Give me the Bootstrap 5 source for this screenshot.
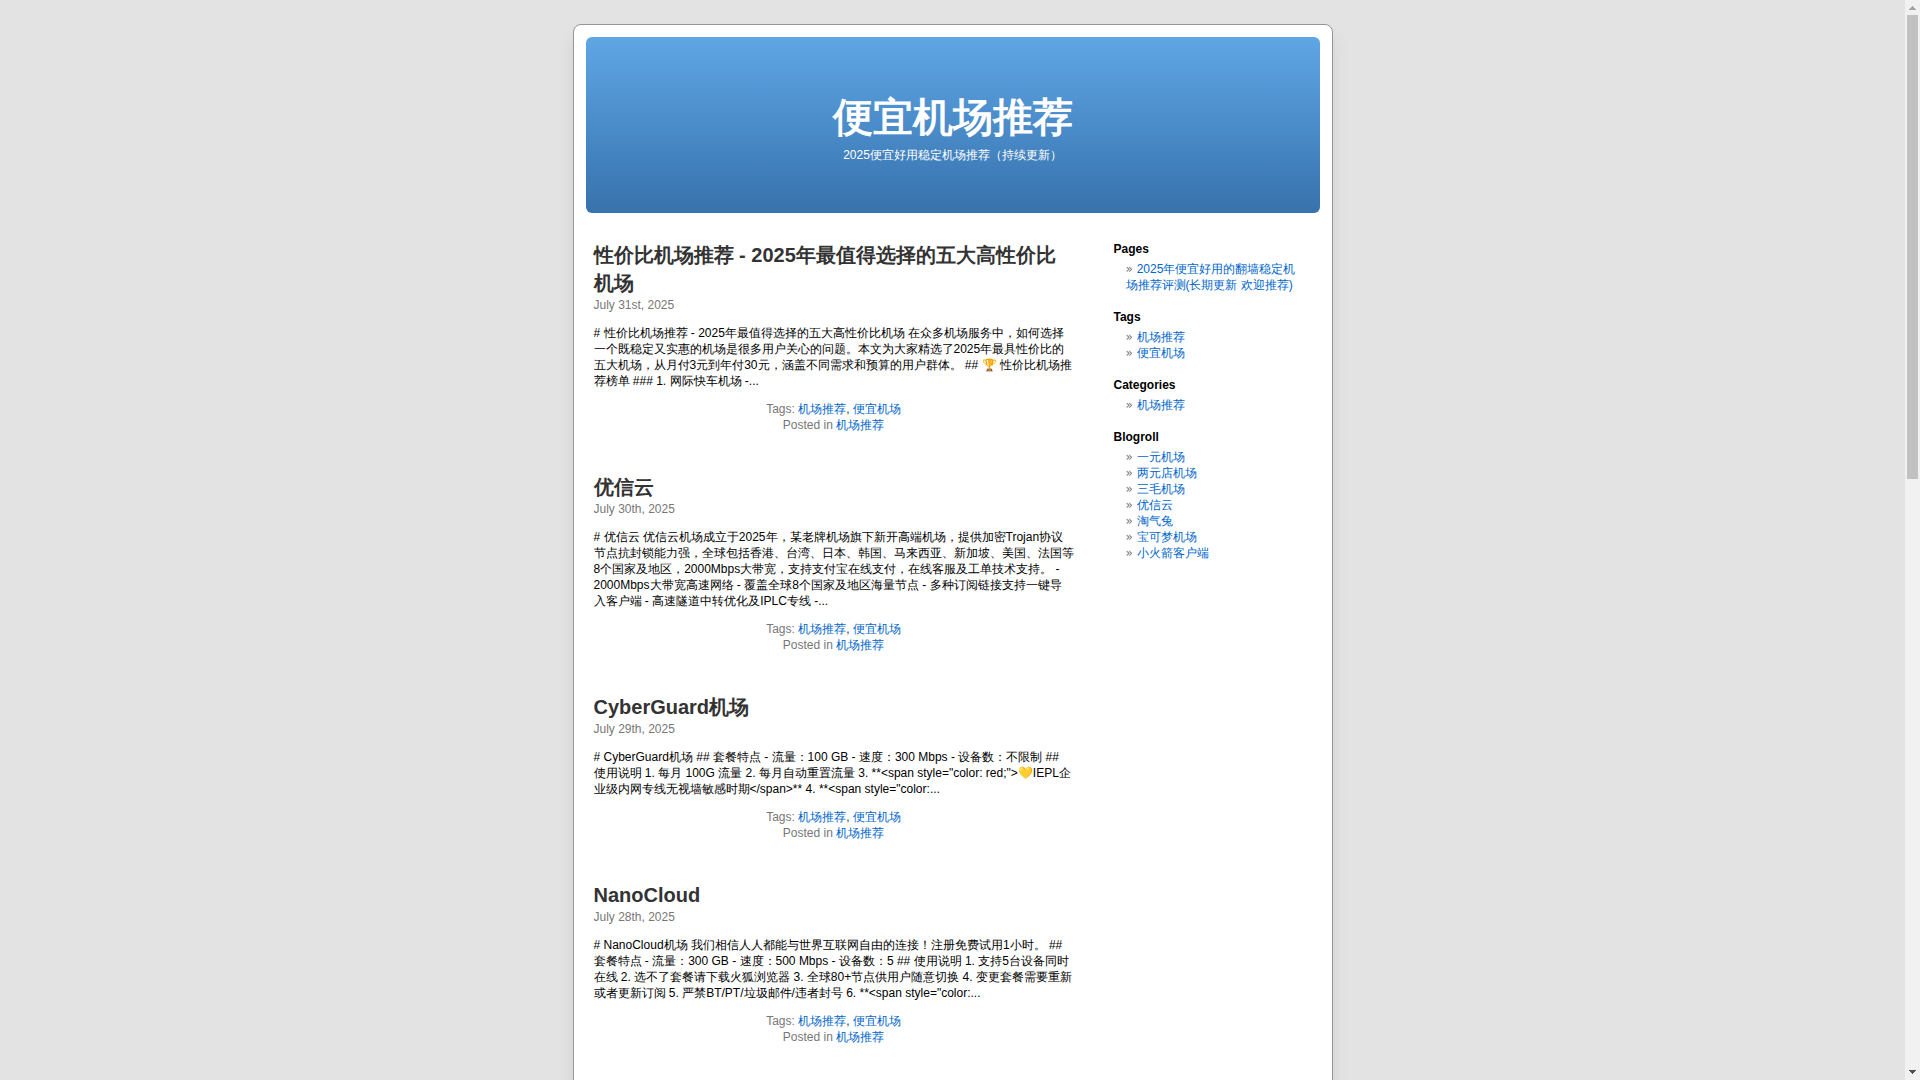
<!DOCTYPE html>
<html lang="zh">
<head>
<meta charset="utf-8">
<meta name="viewport" content="width=device-width, initial-scale=1">
<title>便宜机场推荐</title>
<link rel="stylesheet" href="https://cdn.jsdelivr.net/npm/bootstrap@5.3.0/dist/css/bootstrap.min.css">
<style>
body { font-family: "Liberation Sans", Arial, sans-serif; font-size: 12px; line-height: 16px; color: #000; background: #e3e3e3; }
a { color: #06c; text-decoration: none; }
a:hover { color: #147; text-decoration: underline; }
.scroller { min-width: 0; overflow-y: auto; scrollbar-width: none; }
.scroller::-webkit-scrollbar { display: none; }
.sheet { max-width: 760px; min-height: 1200px; margin-top: 24px; padding: 12px; background: #fff; border: 1px solid #959596; border-radius: 8px; box-shadow: 0 12px 18px rgba(0,0,0,.08); }
.masthead { height: 176px; padding-top: 6px; border-radius: 6px; background: linear-gradient(#5fa6e5, #4b8cca 50%, #3f7eba 76%, #3972ad); color: #fff; }
.masthead h1 { font-size: 40px; line-height: 48px; font-weight: 700; margin: 0 0 6px; }
.masthead h1 a { color: #fff; }
.columns { padding: 28px 16px 0 8px; }
.posts { max-width: 480px; }
.entry { margin-bottom: 40px; }
.entry h2 { font-size: 20px; line-height: 28px; font-weight: 700; margin: 0; }
.entry h2 a { color: #333; }
.entry .date, .entry .meta { color: #777; }
.entry .sep { color: #333; }
.entry p { margin: 12px 0; }
.side { width: 190px; }
.side h2 { font-size: 12px; line-height: 16px; font-weight: 700; margin: 0 0 4px; }
.side ul { margin: 0 0 16px; padding-left: 12px; }
.side li::before { content: "\00BB \0020"; color: #777; font-family: "DejaVu Sans", sans-serif; line-height: 1; }
.bar { width: 15px; background: #f1f1f1; }
.bar svg { display: block; }
.thumb { height: 464px; margin: 0 2px; background: #c1c1c1; }
</style>
<script src="https://cdn.jsdelivr.net/npm/bootstrap@5.3.0/dist/js/bootstrap.bundle.min.js"></script>
</head>
<body class="d-flex vh-100 overflow-hidden">
<div class="scroller flex-grow-1">
  <div class="sheet mx-auto">
    <header class="masthead d-flex flex-column align-items-center justify-content-center text-center">
      <h1><a href="#">便宜机场推荐</a></h1>
      <div>2025便宜好用稳定机场推荐（持续更新）</div>
    </header>
    <div class="columns d-flex justify-content-between">
      <main class="posts">
        <article class="entry">
          <h2><a href="#">性价比机场推荐 - 2025年最值得选择的五大高性价比机场</a></h2>
          <div class="date">July 31st, 2025</div>
          <p># 性价比机场推荐 - 2025年最值得选择的五大高性价比机场 在众多机场服务中，如何选择一个既稳定又实惠的机场是很多用户关心的问题。本文为大家精选了2025年最具性价比的五大机场，从月付3元到年付30元，涵盖不同需求和预算的用户群体。 ## 🏆 性价比机场推荐榜单 ### 1. 网际快车机场 -...</p>
          <div class="meta text-center">Tags: <a href="#">机场推荐</a><span class="sep">,</span> <a href="#">便宜机场</a><br>Posted in <a href="#">机场推荐</a></div>
        </article>
        <article class="entry">
          <h2><a href="#">优信云</a></h2>
          <div class="date">July 30th, 2025</div>
          <p># 优信云 优信云机场成立于2025年，某老牌机场旗下新开高端机场，提供加密Trojan协议节点抗封锁能力强，全球包括香港、台湾、日本、韩国、马来西亚、新加坡、美国、法国等8个国家及地区，2000Mbps大带宽，支持支付宝在线支付，在线客服及工单技术支持。 - 2000Mbps大带宽高速网络 - 覆盖全球8个国家及地区海量节点 - 多种订阅链接支持一键导入客户端 - 高速隧道中转优化及IPLC专线 -...</p>
          <div class="meta text-center">Tags: <a href="#">机场推荐</a><span class="sep">,</span> <a href="#">便宜机场</a><br>Posted in <a href="#">机场推荐</a></div>
        </article>
        <article class="entry">
          <h2><a href="#">CyberGuard机场</a></h2>
          <div class="date">July 29th, 2025</div>
          <p># CyberGuard机场 ## 套餐特点 - 流量：100 GB - 速度：300 Mbps - 设备数：不限制 ## 使用说明 1. 每月 100G 流量 2. 每月自动重置流量 3. **&lt;span style="color: red;"&gt;💛IEPL企业级内网专线无视墙敏感时期&lt;/span&gt;** 4. **&lt;span style="color:...</p>
          <div class="meta text-center">Tags: <a href="#">机场推荐</a><span class="sep">,</span> <a href="#">便宜机场</a><br>Posted in <a href="#">机场推荐</a></div>
        </article>
        <article class="entry">
          <h2><a href="#">NanoCloud</a></h2>
          <div class="date">July 28th, 2025</div>
          <p># NanoCloud机场 我们相信人人都能与世界互联网自由的连接！注册免费试用1小时。 ## 套餐特点 - 流量：300 GB - 速度：500 Mbps - 设备数：5 ## 使用说明 1. 支持5台设备同时在线 2. 选不了套餐请下载火狐浏览器 3. 全球80+节点供用户随意切换 4. 变更套餐需要重新或者更新订阅 5. 严禁BT/PT/垃圾邮件/违者封号 6. **&lt;span style="color:...</p>
          <div class="meta text-center">Tags: <a href="#">机场推荐</a><span class="sep">,</span> <a href="#">便宜机场</a><br>Posted in <a href="#">机场推荐</a></div>
        </article>
      </main>
      <aside class="side flex-shrink-0">
        <h2>Pages</h2>
        <ul class="list-unstyled">
          <li><a href="#">2025年便宜好用的翻墙稳定机场推荐评测(长期更新 欢迎推荐)</a></li>
        </ul>
        <h2>Tags</h2>
        <ul class="list-unstyled">
          <li><a href="#">机场推荐</a></li>
          <li><a href="#">便宜机场</a></li>
        </ul>
        <h2>Categories</h2>
        <ul class="list-unstyled">
          <li><a href="#">机场推荐</a></li>
        </ul>
        <h2>Blogroll</h2>
        <ul class="list-unstyled">
          <li><a href="#">一元机场</a></li>
          <li><a href="#">两元店机场</a></li>
          <li><a href="#">三毛机场</a></li>
          <li><a href="#">优信云</a></li>
          <li><a href="#">淘气兔</a></li>
          <li><a href="#">宝可梦机场</a></li>
          <li><a href="#">小火箭客户端</a></li>
        </ul>
      </aside>
    </div>
  </div>
</div>
<div class="bar flex-shrink-0 d-flex flex-column" aria-hidden="true">
  <svg width="15" height="15" shape-rendering="crispEdges"><path d="M7 6h1v1h1v1h1v1h1v1H4V9h1V8h1V7h1z" fill="#a3a3a3"/></svg>
  <div class="thumb"></div>
  <svg class="mt-auto" width="15" height="15" shape-rendering="crispEdges"><path d="M4 5h7v1h-1v1H9v1H8v1H7V8H6V7H5V6H4z" fill="#505050"/></svg>
</div>
</body>
</html>
